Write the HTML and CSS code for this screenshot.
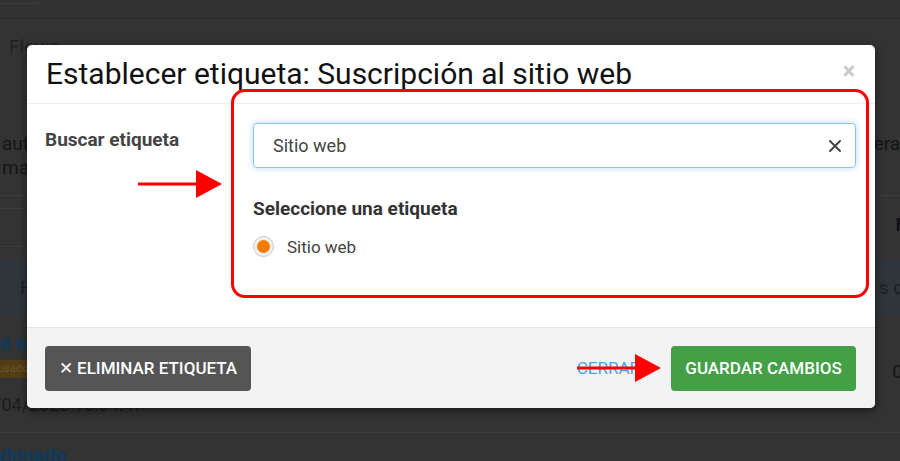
FILE: index.html
```html
<!DOCTYPE html>
<html lang="es">
<head>
<meta charset="utf-8">
<title>Establecer etiqueta</title>
<link rel="stylesheet" href="styles.css">
</head>
<body>
<div class="page">
  <div class="topbar"><div class="topbtn"></div></div>
  <div class="tabs"><span class="tab">Flows</span></div>
  <div class="desc">
    <div class="desc-l">aut<br>mat</div>
    <div class="desc-r">eras</div>
  </div>
  <div class="thead">
    <div class="search"><span class="th-l">…</span></div>
    <span class="th-r">F</span>
  </div>
  <div class="hl"><span class="hl-l">H</span><span class="hl-r">s q</span></div>
  <div class="row">
    <div class="row-l">
      <div class="r-title">a al</div>
      <div class="r-badge">usado</div>
      <div class="r-date">/04/2023 10:04:47</div>
    </div>
    <div class="row-r">0</div>
  </div>
  <div class="row2"><span class="r-title">ndonado</span></div>
</div>

<div class="modal">
  <div class="m-header">
    <h4 class="m-title">Establecer etiqueta: Suscripción al sitio web</h4>
    <span class="m-close">×</span>
  </div>
  <div class="m-body">
    <div class="m-label">Buscar etiqueta</div>
    <div class="m-field">
      <div class="input">
        <span class="input-text">Sitio web</span>
        <svg class="input-clear" width="14" height="14" viewBox="0 0 14 14"><path d="M2 2L12 12M12 2L2 12" stroke="#444" stroke-width="2" stroke-linecap="round"/></svg>
      </div>
      <div class="sel-title">Seleccione una etiqueta</div>
      <label class="radio-row">
        <span class="radio"><span class="radio-dot"></span></span>
        <span class="radio-text">Sitio web</span>
      </label>
    </div>
  </div>
  <div class="m-footer">
    <button class="btn btn-dark">✕ ELIMINAR ETIQUETA</button>
    <div class="f-right">
      <a class="link">CERRAR</a>
      <button class="btn btn-green">GUARDAR CAMBIOS</button>
    </div>
  </div>
</div>

<div class="annot-box"></div>
<svg class="arrow arrow1" width="86" height="30" viewBox="0 0 86 30"><line x1="0" y1="15" x2="60" y2="15" stroke="#f00" stroke-width="3"/><polygon points="58,1 84,15 58,29" fill="#f00"/></svg>
<svg class="arrow arrow2" width="86" height="30" viewBox="0 0 86 30"><line x1="0" y1="15" x2="60" y2="15" stroke="#f00" stroke-width="3"/><polygon points="58,1 84,15 58,29" fill="#f00"/></svg>
</body>
</html>
```
FILE: styles.css
```css
* { box-sizing: border-box; }
html, body { margin: 0; padding: 0; }
body {
  width: 900px; height: 461px; overflow: hidden;
  background: #333333;
  font-family: Roboto, "Noto Sans", Arial, sans-serif;
  position: relative;
}
.page { color: #151515; }
.topbar { height: 19px; background: #323232; border-bottom: 1px solid #2a2a2a; }
.topbtn { width: 44px; height: 4px; border: 1px solid #3a3a3a; border-top: 0; border-radius: 0 0 4px 4px; margin-left: -2px; }
.tabs { height: 50px; padding: 16px 0 0 9px; font-size: 19px; color: #222; }
.desc { display: flex; justify-content: space-between; height: 126px; padding-top: 63px; font-size: 19px; line-height: 24px; }
.desc-l { margin-left: 2px; }
.desc-r { margin-right: -10px; }
.thead { height: 51px; border-top: 1px solid #3b3b3b; display: flex; justify-content: space-between; align-items: center; padding: 6px 0 0 0; font-size: 19px; }
.search { width: 30px; height: 39px; margin-top: 6px; border-top: 1px solid #3b3b3b; border-bottom: 1px solid #3b3b3b; color: #3c3c3c; font-size: 13px; padding-top: 14px; }
.th-r { font-weight: bold; color: #111; margin-right: -6px; }
.hl { height: 59px; margin-top: 12px; background: #2f353a; display: flex; justify-content: space-between; align-items: center; padding: 0 0 0 20px; font-size: 19px; color: #182028; }
.hl-r { margin-right: -4px; }
.row { height: 116px; border-bottom: 1px solid #3b3b3b; display: flex; justify-content: space-between; }
.row-l { padding-top: 13px; margin-left: 0; }
.r-title { font-weight: bold; color: #0d3a5e; font-size: 20px; line-height: 24px; }
.r-badge { display: inline-block; background: #523d14; color: #6a5530; font-size: 11px; line-height: 12px; padding: 3px 4px; margin-top: 6px; margin-left: -6px; }
.r-date { font-size: 18px; color: #1c1c1c; margin-top: 16px; margin-left: -6px; }
.row-r { padding-top: 43px; margin-right: -3px; font-size: 19px; }
.row2 { padding-top: 10px; margin-left: -12px; }

.modal {
  position: absolute; left: 27px; top: 45px; width: 848px; height: 363px;
  background: #fff; border-radius: 5px; overflow: hidden;
  box-shadow: 0 3px 9px rgba(0,0,0,0.5);
  display: flex; flex-direction: column;
}
.m-header { height: 59px; border-bottom: 1px solid #eeeeee; display: flex; align-items: center; justify-content: space-between; padding: 0 20px 0 19px; }
.m-title { margin: 0; font-size: 30px; font-weight: 400; color: #111; line-height: 34px; }
.m-close { color: #c9c9c9; font-size: 23px; font-weight: bold; margin-top: -5px; }
.m-body { flex: 1; display: flex; padding: 19px 19px 0 18px; }
.m-label { width: 208px; font-size: 19px; font-weight: bold; color: #444; padding-top: 5px; }
.m-field { flex: 1; }
.input { height: 45px; border: 1px solid #8cc2f0; border-radius: 4px; box-shadow: 0 0 6px rgba(100,170,240,0.45); display: flex; align-items: center; justify-content: space-between; padding: 0 13px 0 19px; }
.input-text { font-size: 18px; color: #444; }
.sel-title { font-size: 19px; font-weight: bold; color: #333; margin-top: 29px; line-height: 24px; }
.radio-row { display: flex; align-items: center; margin-top: 15px; }
.radio { width: 21px; height: 21px; border-radius: 50%; border: 1px solid #c8c8c8; background: #f0f0f0; display: flex; align-items: center; justify-content: center; }
.radio-dot { width: 13px; height: 13px; border-radius: 50%; background: #f57c00; }
.radio-text { margin-left: 13px; font-size: 17px; color: #444; }
.m-footer { height: 81px; background: #f3f3f3; border-top: 1px solid #e2e2e2; display: flex; align-items: center; justify-content: space-between; padding: 0 19px 0 18px; }
.btn { height: 45px; border: 0; border-radius: 4px; color: #fff; font-family: Roboto, Arial, sans-serif; font-size: 17px; font-weight: 500; padding: 0; }
.btn-dark { width: 206px; background: #555555; }
.btn-green { width: 185px; background: #43a047; }
.f-right { display: flex; align-items: center; gap: 31px; }
.link { color: #42a5f5; font-size: 17px; text-decoration: none; }

.annot-box { position: absolute; left: 231px; top: 89px; width: 638px; height: 209px; border: 3px solid #ff0000; border-radius: 14px; }
.arrow { position: absolute; }
.arrow1 { left: 138px; top: 169px; }
.arrow2 { left: 577px; top: 353px; }
```
